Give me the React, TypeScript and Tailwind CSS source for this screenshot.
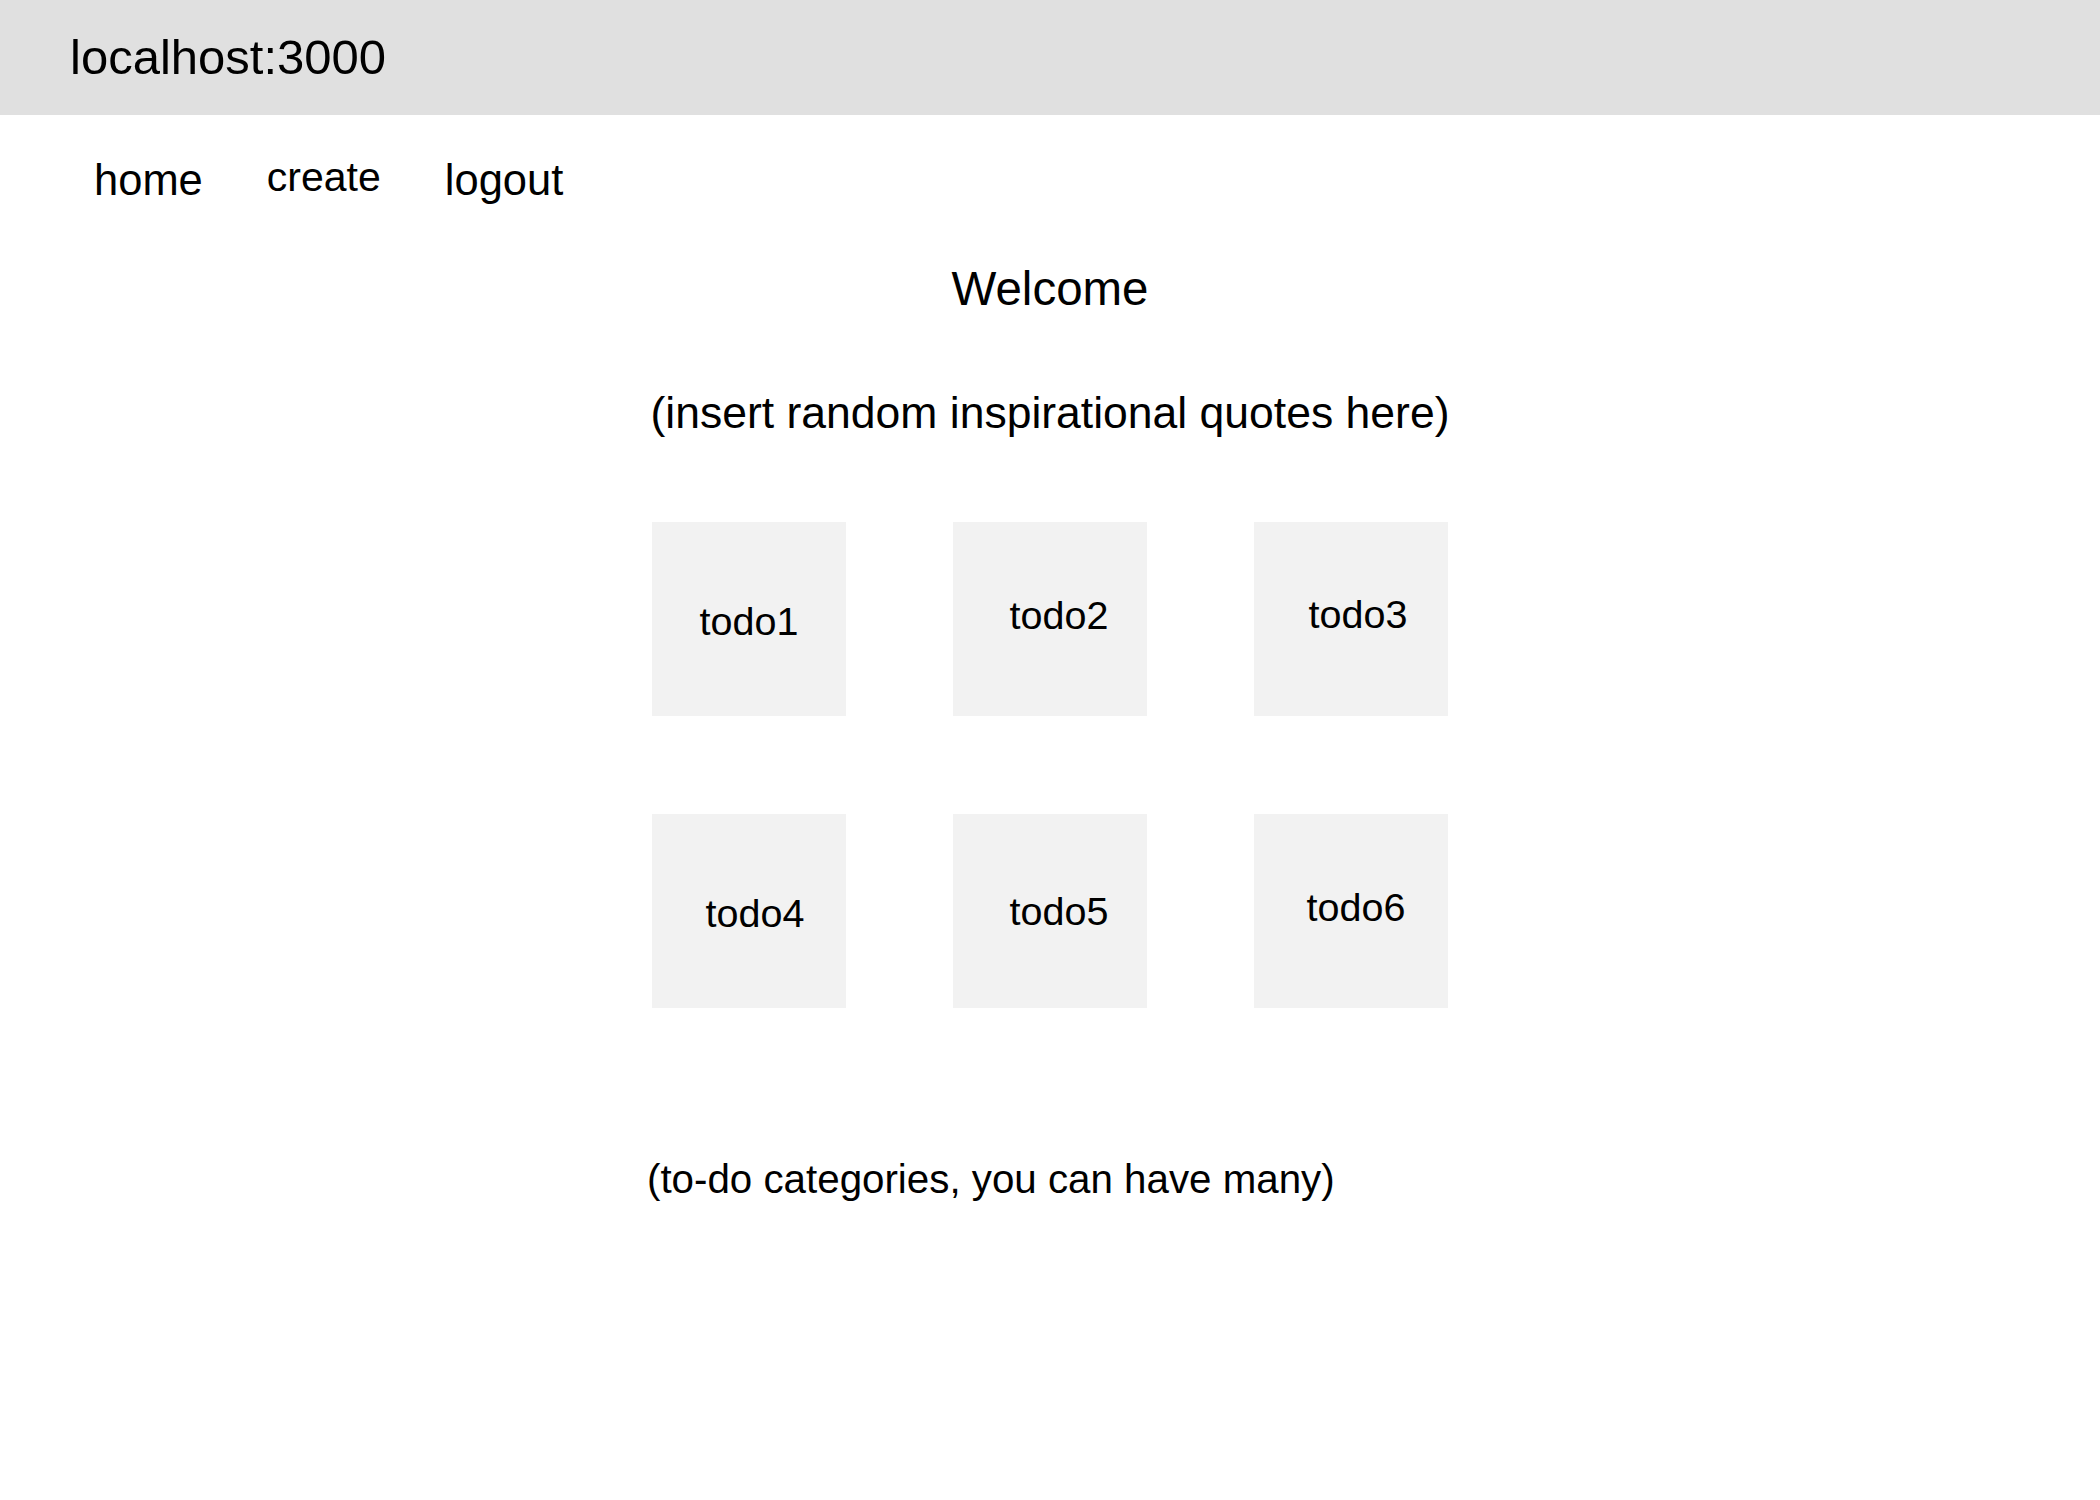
import React from 'react';

const todos = [
  { name: 'todo1', nudge: 'pt-[6px]' },
  { name: 'todo2', nudge: 'pl-[18px] pb-[6px]' },
  { name: 'todo3', nudge: 'pl-[14px] pb-[8px]' },
  { name: 'todo4', nudge: 'pl-[12px] pt-[7px]' },
  { name: 'todo5', nudge: 'pl-[18px] pt-[3px]' },
  { name: 'todo6', nudge: 'pl-[10px] pb-[5px]' },
];

const App: React.FC = () => {
  return (
    <div className="min-h-screen bg-white text-black font-['Liberation_Sans',Arial,sans-serif]">
      {/* Browser bar */}
      <header className="h-[115px] bg-[#e0e0e0] flex items-center pl-[70px]">
        <span className="text-[49px] leading-none">localhost:3000</span>
      </header>

      {/* Nav */}
      <nav className="flex items-start pt-[44px] pl-[94px] gap-[64px]">
        <a className="text-[43.5px] leading-none">home</a>
        <a className="text-[41px] leading-none -mt-[2px]">create</a>
        <a className="text-[43.5px] leading-none">logout</a>
      </nav>

      <main className="flex flex-col items-center">
        <h1 className="mt-[62px] text-[47.5px] leading-none font-normal">Welcome</h1>

        <div className="w-[800px] flex flex-col">
          <p className="mt-[79px] text-[44.5px] leading-none text-center">
            (insert random inspirational quotes here)
          </p>

          <div className="mt-[86px] grid grid-cols-[194px_194px_194px] justify-center gap-x-[107px] gap-y-[98px]">
            {todos.map((t) => (
              <div
                key={t.name}
                className={`h-[194px] bg-[#f2f2f2] flex items-center justify-center ${t.nudge}`}
              >
                <span className="text-[39.5px] leading-none">{t.name}</span>
              </div>
            ))}
          </div>

          <p className="mt-[152px] -ml-[3px] text-[40.3px] leading-none">
            (to-do categories, you can have many)
          </p>
        </div>
      </main>
    </div>
  );
};

export default App;
